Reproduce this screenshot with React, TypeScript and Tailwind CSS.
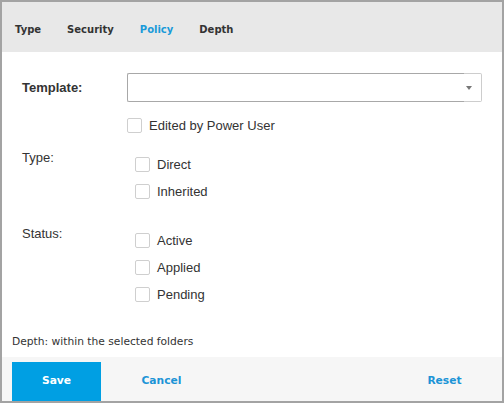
import { useState } from "react";

const tabs = ["Type", "Security", "Policy", "Depth"];

function Box({ label, checked, onToggle }: { label: string; checked: boolean; onToggle: () => void }) {
  return (
    <label className="flex h-[15px] cursor-pointer items-center gap-[7px]" onClick={onToggle}>
      <span className="flex h-[15px] w-[15px] shrink-0 items-center justify-center rounded-[2px] border border-[#cfcfcf] bg-white text-[10px] text-[#199ad9]">
        {checked ? "✓" : ""}
      </span>
      <span className="text-[13px] leading-[15px] text-[#333]">{label}</span>
    </label>
  );
}

export default function App() {
  const [checked, setChecked] = useState<Record<string, boolean>>({});
  const toggle = (k: string) => setChecked((c) => ({ ...c, [k]: !c[k] }));

  return (
    <div className="flex h-[403px] w-[504px] flex-col border-2 border-[#a3a3a3] bg-white font-['Liberation_Sans',Arial,sans-serif]">
      <div className="flex h-[50px] shrink-0 items-center gap-[26px] bg-[#e8e8e8] px-[13px] pt-[4px] font-['DejaVu_Sans',Verdana,sans-serif] text-[10px] font-bold">
        {tabs.map((t) => (
          <span key={t} className={t === "Policy" ? "text-[#199ad9]" : "text-[#333]"}>
            {t}
          </span>
        ))}
      </div>

      <div className="flex flex-1 flex-col">
        <div className="mt-[21px] flex h-[29px] items-center">
          <span className="w-[125px] pl-[20px] text-[13px] font-bold text-[#333]">Template:</span>
          <div className="flex h-[29px] w-[355px]">
            <div className="flex-1 rounded-l-[2px] border-y border-l border-[#a8a8a8] bg-white" />
            <div className="flex w-[18px] items-center justify-start rounded-r-[2px] border-y border-r border-[#cdcdcd] bg-white">
              <span className="ml-[2px] h-0 w-0 border-x-[3px] border-t-[4px] border-x-transparent border-t-[#777]" />
            </div>
          </div>
        </div>

        <div className="mt-[16px] pl-[125px]">
          <Box label="Edited by Power User" checked={!!checked.power} onToggle={() => toggle("power")} />
        </div>

        <div className="mt-[17px] flex">
          <span className="w-[133px] pl-[20px] text-[13px] leading-[15px] text-[#333]">Type:</span>
          <div className="flex flex-col gap-[12px] pt-[7px]">
            <Box label="Direct" checked={!!checked.direct} onToggle={() => toggle("direct")} />
            <Box label="Inherited" checked={!!checked.inherited} onToggle={() => toggle("inherited")} />
          </div>
        </div>

        <div className="mt-[27px] flex">
          <span className="w-[133px] pl-[20px] text-[13px] leading-[15px] text-[#333]">Status:</span>
          <div className="flex flex-col gap-[12px] pt-[7px]">
            <Box label="Active" checked={!!checked.active} onToggle={() => toggle("active")} />
            <Box label="Applied" checked={!!checked.applied} onToggle={() => toggle("applied")} />
            <Box label="Pending" checked={!!checked.pending} onToggle={() => toggle("pending")} />
          </div>
        </div>

        <p className="mt-auto pb-[9px] pl-[10px] font-['DejaVu_Sans',Verdana,sans-serif] text-[10.7px] leading-[13px] text-[#333]">
          Depth: within the selected folders
        </p>
      </div>

      <div className="flex h-[44px] shrink-0 items-end bg-[#f6f6f6] pl-[10px] pr-[13px] font-['DejaVu_Sans',Verdana,sans-serif] text-[10.7px] font-bold">
        <button className="h-[39px] w-[89px] bg-[#009fe3] text-white">Save</button>
        <button className="ml-[16px] h-[39px] w-[89px] text-[#1c94d6]">Cancel</button>
        <div className="flex-1" />
        <button className="h-[39px] w-[89px] text-[#1c94d6]">Reset</button>
      </div>
    </div>
  );
}
